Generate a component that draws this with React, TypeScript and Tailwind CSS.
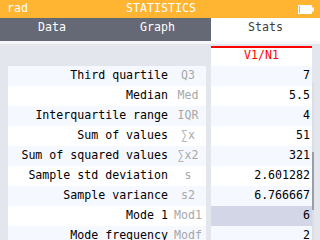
const rows = [
  { label: "Third quartile", sym: "Q3", value: "7" },
  { label: "Median", sym: "Med", value: "5.5" },
  { label: "Interquartile range", sym: "IQR", value: "4" },
  { label: "Sum of values", sym: "∑x", value: "51" },
  { label: "Sum of squared values", sym: "∑x2", value: "321" },
  { label: "Sample std deviation", sym: "s", value: "2.601282" },
  { label: "Sample variance", sym: "s2", value: "6.766667" },
  { label: "Mode 1", sym: "Mod1", value: "6", selected: true },
  { label: "Mode frequency", sym: "Modf", value: "2" },
];

function Battery() {
  return (
    <svg width="17" height="9" viewBox="0 0 17 9" className="block">
      <rect x="0" y="0.5" width="1" height="8" fill="#fff" />
      <rect x="0.5" y="0.5" width="13" height="8" fill="none" stroke="#fff" />
      <rect x="2" y="1" width="11" height="7" fill="#fff" />
      <rect x="14" y="2.5" width="2" height="4" fill="#fff" />
    </svg>
  );
}

export default function App() {
  return (
    <div
      className="w-[320px] h-[240px] overflow-hidden bg-[#e4e6ee] flex flex-col text-[11.6px] leading-none"
      style={{ fontFamily: '"DejaVu Sans Mono", monospace' }}
    >
      <div className="h-[18px] shrink-0 bg-[#ffb531] text-white flex items-center justify-between pl-[7px] pr-[5px]">
        <span className="w-[40px]">rad</span>
        <span>STATISTICS</span>
        <div className="w-[40px] flex justify-end">
          <Battery />
        </div>
      </div>
      <div className="h-[23px] shrink-0 bg-[#656975] flex">
        <div className="w-[104px] flex items-center justify-center text-white pb-[4px]">Data</div>
        <div className="w-[107px] flex items-center justify-center text-white pb-[4px]">Graph</div>
        <div className="flex-1 bg-white flex items-center justify-center text-[#404040] pb-[4px]">
          Stats
        </div>
      </div>
      <div className="h-[3px] shrink-0 bg-[#f7f7fa]" />
      <div className="flex shrink-0 pl-[8px] pt-[2px]">
        <div className="w-[198px] flex flex-col pt-[20px]">
          {rows.map((r, i) => (
            <div
              key={r.label}
              className={`h-[20px] shrink-0 flex items-center ${i % 2 === 0 ? "bg-[#f5f8ff]" : "bg-white"}`}
            >
              <span className="flex-1 text-right pr-[2px] text-black whitespace-nowrap">{r.label}</span>
              <span className="w-[36px] text-center text-[#a8a8a8]">{r.sym}</span>
            </div>
          ))}
        </div>
        <div className="w-[5px]" />
        <div className="w-[101px] flex flex-col">
          <div className="h-[2px] bg-[#ff0000]" />
          <div className="h-[18px] bg-white flex items-center justify-center text-[#ff0000] pb-[3px]">V1/N1</div>
          {rows.map((r, i) => (
            <div
              key={r.label}
              className={`h-[20px] shrink-0 flex items-center justify-end pr-[2px] text-black ${
                r.selected ? "bg-[#d3d6e6]" : i % 2 === 0 ? "bg-[#f5f8ff]" : "bg-white"
              }`}
            >
              {r.value}
            </div>
          ))}
        </div>
        <div className="w-[2px] flex flex-col pt-[36px]">
          <div className="h-[70px] bg-[#dcdee6]" />
          <div className="h-[58px] bg-[#9b9ea8]" />
          <div className="flex-1 bg-[#dcdee6]" />
        </div>
      </div>
    </div>
  );
}
